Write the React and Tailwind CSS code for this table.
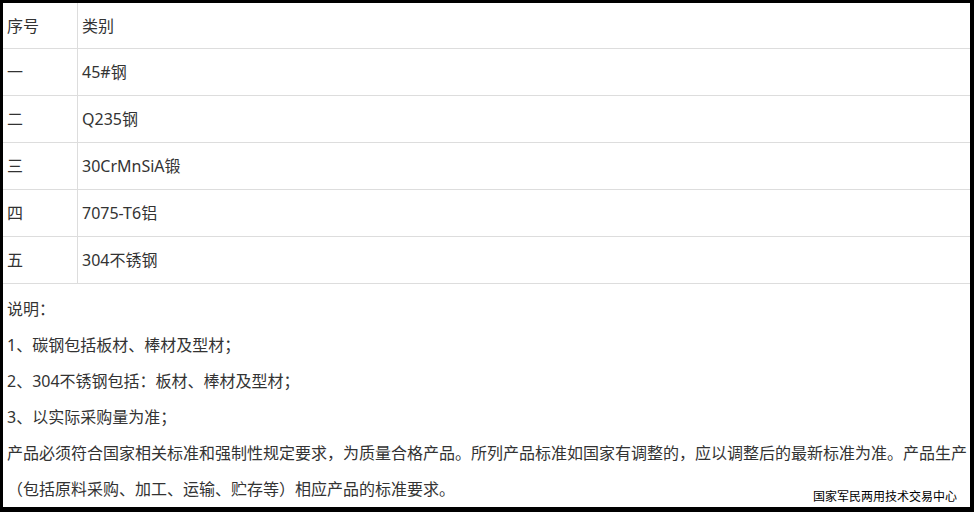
export default function App() {
  const rows = [
    ["一", "45#钢"],
    ["二", "Q235钢"],
    ["三", "30CrMnSiA锻"],
    ["四", "7075-T6铝"],
    ["五", "304不锈钢"],
  ];
  const font = { fontFamily: '"Noto Sans", "Noto Sans CJK SC", sans-serif' };
  return (
    <div className="bg-black h-[512px] pl-[3px] pt-[3px] pr-[4px] pb-[5px]">
      <div
        className="bg-white h-full relative overflow-hidden text-[16px] text-[#333]"
        style={font}
      >
        <div className="flex h-[46px] border-b border-[#dddddd] items-center">
          <div className="w-[75px] h-full border-r border-[#dddddd] pl-[4px] flex items-center">序号</div>
          <div className="flex-1 pl-[4px]">类别</div>
        </div>
        {rows.map(([a, b]) => (
          <div key={a} className="flex h-[47px] border-b border-[#dddddd] items-center">
            <div className="w-[75px] h-full border-r border-[#dddddd] pl-[4px] flex items-center">{a}</div>
            <div className="flex-1 pl-[4px]">{b}</div>
          </div>
        ))}
        <div className="pt-[7px] pl-[4px] leading-[36px]">
          <p>说明：</p>
          <p>1、碳钢包括板材、棒材及型材；</p>
          <p>2、304不锈钢包括：板材、棒材及型材；</p>
          <p>3、以实际采购量为准；</p>
          <p>产品必须符合国家相关标准和强制性规定要求，为质量合格产品。所列产品标准如国家有调整的，应以调整后的最新标准为准。产品生产（包括原料采购、加工、运输、贮存等）相应产品的标准要求。</p>
        </div>
        <div
          className="absolute right-[13px] bottom-[5px] text-[12px] leading-[12px] text-black"
          style={{ fontFamily: '"Noto Sans CJK SC", sans-serif' }}
        >
          国家军民两用技术交易中心
        </div>
      </div>
    </div>
  );
}
